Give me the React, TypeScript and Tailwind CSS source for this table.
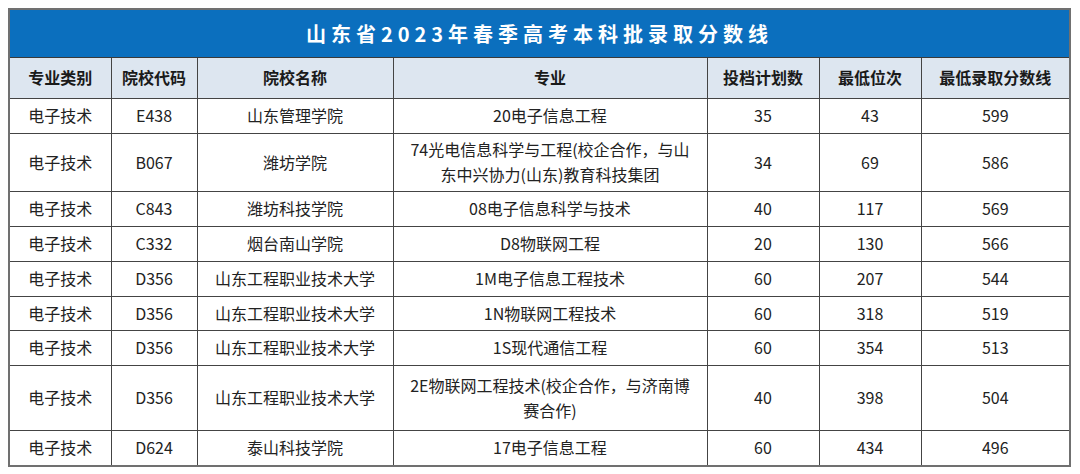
import React from "react";

const rows: { h: string; cells: React.ReactNode[] }[] = [
  { h: "h-[35px]", cells: ["电子技术", "E438", "山东管理学院", "20电子信息工程", "35", "43", "599"] },
  {
    h: "h-[58px]",
    cells: [
      "电子技术",
      "B067",
      "潍坊学院",
      <>
        74光电信息科学与工程(校企合作，与山
        <br />
        东中兴协力(山东)教育科技集团
      </>,
      "34",
      "69",
      "586",
    ],
  },
  { h: "h-[35px]", cells: ["电子技术", "C843", "潍坊科技学院", "08电子信息科学与技术", "40", "117", "569"] },
  { h: "h-[35px]", cells: ["电子技术", "C332", "烟台南山学院", "D8物联网工程", "20", "130", "566"] },
  { h: "h-[35px]", cells: ["电子技术", "D356", "山东工程职业技术大学", "1M电子信息工程技术", "60", "207", "544"] },
  { h: "h-[34px]", cells: ["电子技术", "D356", "山东工程职业技术大学", "1N物联网工程技术", "60", "318", "519"] },
  { h: "h-[35px]", cells: ["电子技术", "D356", "山东工程职业技术大学", "1S现代通信工程", "60", "354", "513"] },
  {
    h: "h-[65px]",
    cells: [
      "电子技术",
      "D356",
      "山东工程职业技术大学",
      <>
        2E物联网工程技术(校企合作，与济南博
        <br />
        赛合作)
      </>,
      "40",
      "398",
      "504",
    ],
  },
  { h: "h-[35px]", cells: ["电子技术", "D624", "泰山科技学院", "17电子信息工程", "60", "434", "496"] },
];

const headers = ["专业类别", "院校代码", "院校名称", "专业", "投档计划数", "最低位次", "最低录取分数线"];
const widths = [101, 86, 196, 314, 112, 102, 148];

export default function App() {
  return (
    <div
      className="w-[1080px] h-[474px] bg-white pt-[8px] pl-[8px]"
      style={{ fontFamily: '"Noto Sans CJK SC", "Noto Sans", sans-serif' }}
    >
      <div className="w-[1063px] border-2 border-[#707070] bg-white">
        <div className="h-[48px] bg-[#0b6fbe] flex items-center justify-center text-white font-bold text-[20px] tracking-[5px] border-b border-[#3a3a3a]">
          山东省2023年春季高考本科批录取分数线
        </div>
        <table className="table-fixed border-collapse w-[1059px] text-[16px] text-[#222] leading-[25px]">
          <colgroup>
            {widths.map((w, i) => (
              <col key={i} style={{ width: w }} />
            ))}
          </colgroup>
          <thead>
            <tr className="h-[40px] bg-[#dde6f0]">
              {headers.map((t, i) => (
                <th
                  key={i}
                  className="border border-[#444] border-t-0 first:border-l-0 last:border-r-0 font-bold text-center align-middle p-0 text-[#1a1a1a]"
                >
                  {t}
                </th>
              ))}
            </tr>
          </thead>
          <tbody>
            {rows.map((r, ri) => (
              <tr key={ri} className={r.h}>
                {r.cells.map((c, ci) => (
                  <td
                    key={ci}
                    className="border border-[#444] first:border-l-0 last:border-r-0 text-center align-middle p-0"
                    style={ri === rows.length - 1 ? { borderBottomWidth: 0 } : undefined}
                  >
                    {c}
                  </td>
                ))}
              </tr>
            ))}
          </tbody>
        </table>
      </div>
    </div>
  );
}
